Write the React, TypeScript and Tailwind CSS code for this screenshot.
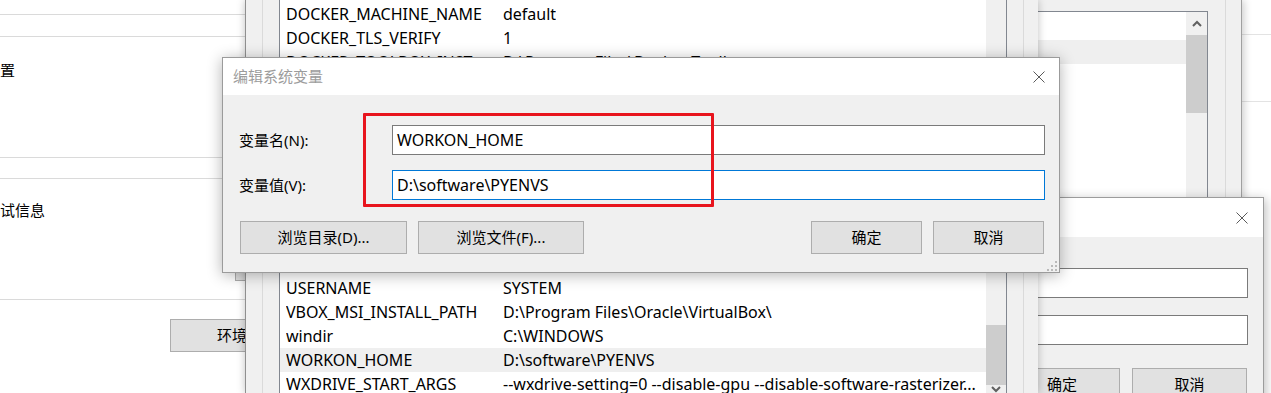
import React from "react";

type Row = { name: string; value: string; selected?: boolean };

const topRows: Row[] = [
  { name: "DOCKER_MACHINE_NAME", value: "default" },
  { name: "DOCKER_TLS_VERIFY", value: "1" },
  { name: "DOCKER_TOOLBOX_INSTALL_PATH", value: "D:\\Program Files\\Docker Toolbox" },
];

const bottomRows: Row[] = [
  { name: "USERNAME", value: "SYSTEM" },
  { name: "VBOX_MSI_INSTALL_PATH", value: "D:\\Program Files\\Oracle\\VirtualBox\\" },
  { name: "windir", value: "C:\\WINDOWS" },
  { name: "WORKON_HOME", value: "D:\\software\\PYENVS", selected: true },
  {
    name: "WXDRIVE_START_ARGS",
    value: "--wxdrive-setting=0 --disable-gpu --disable-software-rasterizer...",
  },
];

const CloseX = () => (
  <svg width="12" height="12" viewBox="0 0 12 12">
    <path d="M0.5 0.5L11.5 11.5M11.5 0.5L0.5 11.5" stroke="#5a5a5a" strokeWidth="1" />
  </svg>
);

const ChevronUp = () => (
  <svg width="10" height="7" viewBox="0 0 10 7">
    <path d="M1 6L5 2L9 6" stroke="#606060" strokeWidth="2" fill="none" />
  </svg>
);

const ChevronDown = () => (
  <svg width="10" height="7" viewBox="0 0 10 7">
    <path d="M1 1L5 5L9 1" stroke="#606060" strokeWidth="2" fill="none" />
  </svg>
);

const Grip = () => (
  <svg width="10" height="10" viewBox="0 0 10 10">
    <g fill="#b9b9b9">
      <rect x="8" y="0" width="2" height="2" />
      <rect x="4" y="4" width="2" height="2" />
      <rect x="8" y="4" width="2" height="2" />
      <rect x="0" y="8" width="2" height="2" />
      <rect x="4" y="8" width="2" height="2" />
      <rect x="8" y="8" width="2" height="2" />
    </g>
  </svg>
);

const WinButton = ({ label, w }: { label: string; w: string }) => (
  <div
    className={`${w} h-[33px] shrink-0 flex items-center justify-center bg-[#e1e1e1] border border-[#adadad] text-[15px] text-black`}
  >
    {label}
  </div>
);

const ListRow = ({ row }: { row: Row }) => (
  <div
    className={`flex h-[24px] items-center pl-[6px] whitespace-nowrap text-[16px] text-black ${
      row.selected ? "bg-[#efefef]" : ""
    }`}
  >
    <span className="w-[217px] shrink-0 pr-[12px] truncate">{row.name}</span>
    <span className="overflow-hidden">{row.value}</span>
  </div>
);

// system properties window, far left
const SystemProps = () => (
  <div className="absolute left-0 top-0 w-[420px] h-full bg-white flex flex-col text-[15px] text-black">
    <div className="h-[15px] border-b border-[#dadada]" />
    <div className="h-[22px] border-b border-[#dadada]" />
    <div className="h-[121px] border-b border-[#dadada] pt-[22px]">
      <span>置</span>
    </div>
    <div className="h-[21px] border-b border-[#dadada]" />
    <div className="h-[121px] border-b border-[#dadada] pt-[20px] flex flex-col">
      <span>试信息</span>
      <div className="mt-auto mb-[18px] ml-[235px] w-[120px] h-[30px] bg-[#e1e1e1] border border-[#adadad]" />
    </div>
    <div className="pt-[19px] pl-[170px]">
      <div className="w-[75px] h-[33px] bg-[#e1e1e1] border-y border-l border-[#adadad] flex items-center pl-[46px] whitespace-nowrap overflow-hidden">
        环境变量(N)...
      </div>
    </div>
  </div>
);

// far right sliver
const RightSliver = () => (
  <div className="absolute left-[1200px] top-0 w-[71px] h-full bg-white flex flex-col">
    <div className="h-[35px] border-b border-[#e3e3e3]" />
    <div className="h-[67px] border-b border-[#e3e3e3]" />
  </div>
);

// user variables window, top right
const UserVars = () => (
  <div className="absolute left-[900px] top-0 w-[342px] h-[260px] bg-[#f0f0f0] border-r border-[#a0a0a0] shadow-[2px_0_8px_rgba(0,0,0,0.2)] flex">
    <div className="flex-1 pt-[11px]">
      <div className="h-full border-t border-r border-[#828790] bg-white flex">
        <div className="flex-1 flex flex-col">
          <div className="h-[28px]" />
          <div className="h-[24px] bg-[#efefef]" />
        </div>
        <div className="w-[21px] bg-[#f0f0f0] flex flex-col">
          <div className="h-[23px] flex items-center justify-center">
            <ChevronUp />
          </div>
          <div className="h-[78px] bg-[#cdcdcd]" />
        </div>
      </div>
    </div>
    <div className="w-[17px]" />
    <div className="w-[16px] border-l border-[#dadada]" />
  </div>
);

// second edit dialog behind
const BackDialog = () => (
  <div className="absolute left-[880px] top-[197px] w-[384px] h-[220px] bg-[#f0f0f0] border border-[#9c9c9c] shadow-[2px_2px_10px_rgba(0,0,0,0.25)] flex flex-col">
    <div className="h-[39px] bg-white flex items-center justify-end pr-[15px]">
      <CloseX />
    </div>
    <div className="flex flex-col pt-[31px] pl-[20px] pr-[15px] gap-[17px]">
      <div className="h-[30px] bg-white border border-[#7a7a7a]" />
      <div className="h-[30px] bg-white border border-[#7a7a7a]" />
    </div>
    <div className="flex justify-end gap-[12px] pt-[23px] pr-[16px]">
      <WinButton label="确定" w="w-[116px]" />
      <WinButton label="取消" w="w-[115px]" />
    </div>
  </div>
);

// environment variables window (system list)
const EnvVars = () => (
  <div className="absolute left-[245px] top-0 w-[793px] h-full bg-[#f0f0f0] border-l border-[#8f8f8f] shadow-[0_0_8px_rgba(0,0,0,0.25)] flex pl-[16px] pr-[14px]">
    <div className="flex-1 flex border-x border-[#dadada] px-[16px]">
      <div className="flex-1 flex border-x border-[#828790] bg-white">
        <div className="flex-1 flex flex-col pt-[2px] overflow-hidden">
          {topRows.map((r) => (
            <ListRow key={r.name} row={r} />
          ))}
          <div className="h-[202px] shrink-0" />
          {bottomRows.map((r) => (
            <ListRow key={r.name} row={r} />
          ))}
        </div>
        <div className="w-[20px] bg-[#f0f0f0] flex flex-col items-center">
          <div className="h-[325px] shrink-0" />
          <div className="w-full h-[60px] shrink-0 bg-[#cdcdcd]" />
          <div className="mt-[1px]">
            <ChevronDown />
          </div>
        </div>
      </div>
    </div>
  </div>
);

// front dialog: 编辑系统变量
const EditDialog = () => (
  <div className="absolute left-[222px] top-[57px] w-[838px] h-[216px] bg-[#f0f0f0] border border-[#9b9b9b] shadow-[0_2px_14px_rgba(0,0,0,0.3)] flex flex-col">
    <div className="h-[37px] bg-white flex items-center justify-between pl-[10px] pr-[14px]">
      <span className="text-[15px] text-[#9c9c9c]">编辑系统变量</span>
      <CloseX />
    </div>
    <div className="flex flex-col pt-[30px] pl-[16px] pr-[14px] text-[15px] text-black">
      <div className="flex items-center h-[30px]">
        <span className="w-[153px] shrink-0">变量名(N):</span>
        <div className="flex-1 h-full bg-white border border-[#7a7a7a] flex items-center pl-[4px] text-[16px]">
          WORKON_HOME
        </div>
      </div>
      <div className="flex items-center h-[30px] mt-[15px]">
        <span className="w-[153px] shrink-0">变量值(V):</span>
        <div className="flex-1 h-full bg-white border border-[#0078d7] flex items-center pl-[4px] text-[16px]">
          D:\software\PYENVS
        </div>
      </div>
      <div className="flex mt-[21px] pl-[1px] pr-[1px] gap-[11px]">
        <WinButton label="浏览目录(D)..." w="w-[167px]" />
        <WinButton label="浏览文件(F)..." w="w-[166px]" />
        <div className="flex-1" />
        <WinButton label="确定" w="w-[111px]" />
        <WinButton label="取消" w="w-[111px]" />
      </div>
    </div>
    <div className="absolute right-[2px] bottom-[1px]">
      <Grip />
    </div>
    {/* red annotation box */}
    <div className="absolute left-[140px] top-[55px] w-[351px] h-[94px] border-[3px] border-[#e8141d] rounded-[1px]" />
  </div>
);

export default function App() {
  return (
    <div className="relative w-[1271px] h-[393px] overflow-hidden bg-white font-['Noto_Sans','Noto_Sans_CJK_SC',sans-serif]">
      <SystemProps />
      <RightSliver />
      <UserVars />
      <BackDialog />
      <EnvVars />
      <EditDialog />
    </div>
  );
}
